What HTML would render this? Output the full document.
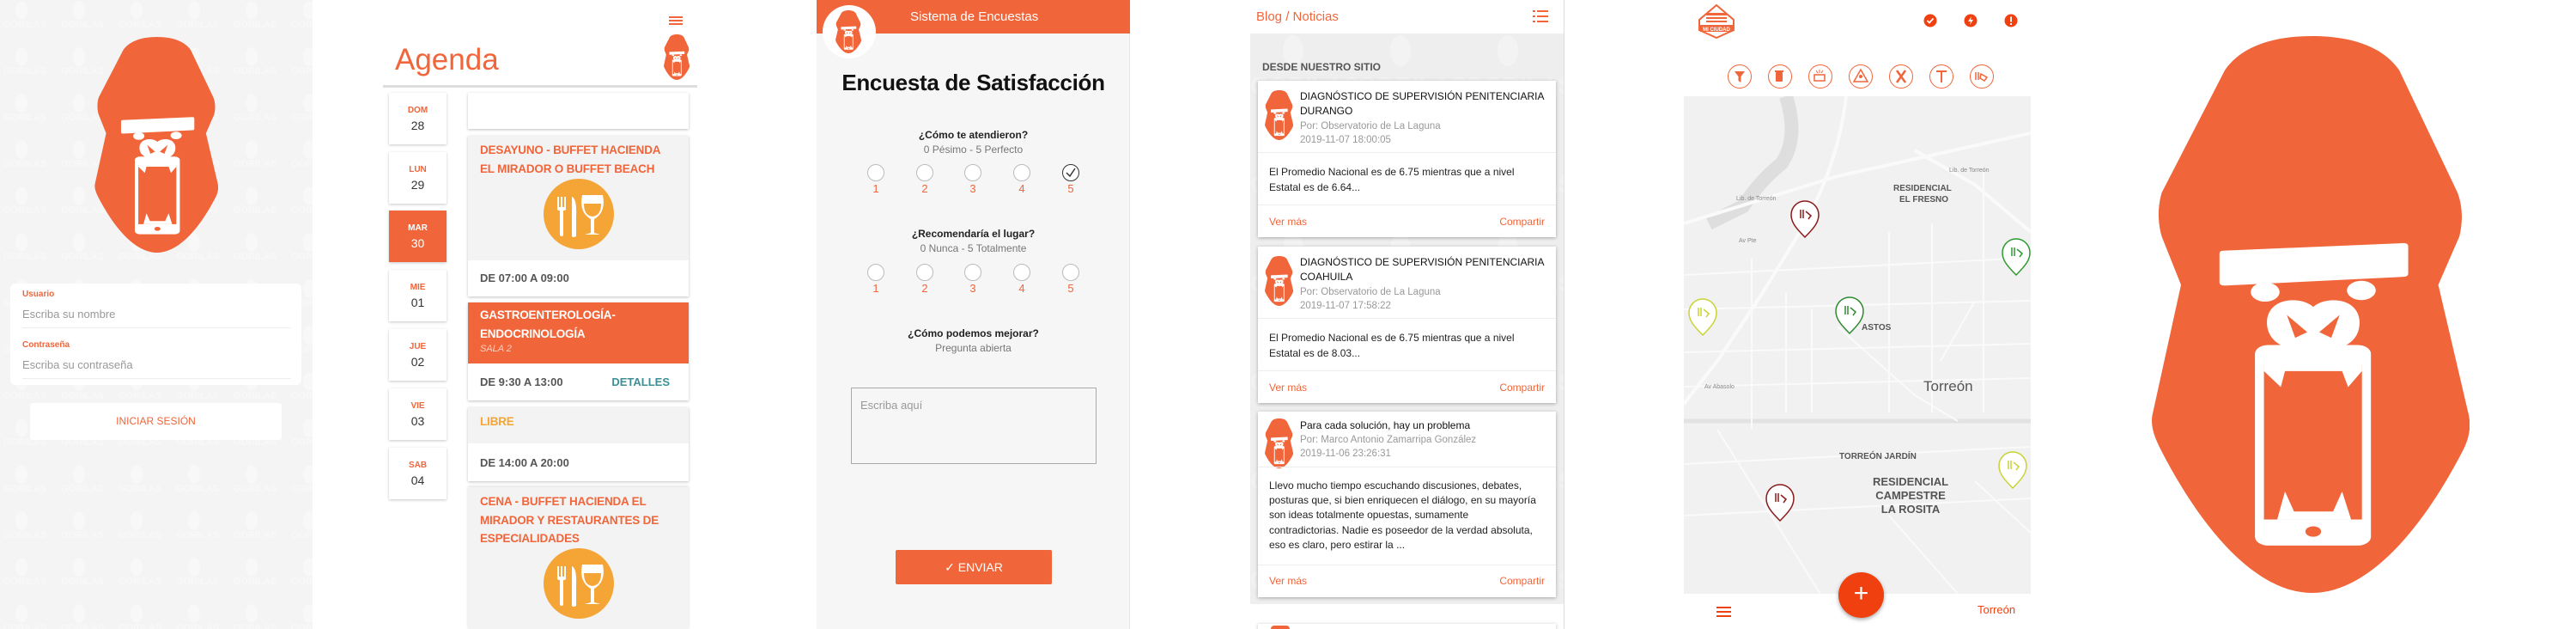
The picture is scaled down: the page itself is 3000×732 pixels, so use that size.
<!DOCTYPE html>
<html style="overflow:hidden"><head><meta charset="utf-8">
<style>
*{margin:0;padding:0;box-sizing:border-box}
html,body{width:3000px;height:732px;overflow:hidden}
body{background:#fff;position:relative;font-family:"Liberation Sans",sans-serif}
svg{display:block}
.a{position:absolute}
.or{color:#f0653a}
.sh{box-shadow:0 1px 3px rgba(0,0,0,.25)}
.dc{position:absolute;left:453px;width:67px;height:60px;background:#fff;text-align:center;box-shadow:0 1px 3px rgba(0,0,0,.22)}
.dc b{display:block;font-size:10px;color:#f0653a;margin-top:15px}
.dc span{display:block;font-size:14px;color:#333;margin-top:4px}
.ev{position:absolute;left:545px;width:257px}
.evt{font-size:13.5px;font-weight:bold;color:#f0653a;line-height:21.5px;padding:6px 0 0 14px;letter-spacing:-.2px}
.ft{background:#fff;font-size:13px;font-weight:bold;color:#555;padding-left:14px}
.rad{position:absolute;width:20px;height:20px;border:1px solid #bbb;border-radius:50%;background:#fff}
.num{position:absolute;font-size:13px;color:#f0653a;width:20px;text-align:center}
.q{position:absolute;left:951px;width:365px;text-align:center}
.card{position:absolute;left:1465px;width:347px;background:#fff;box-shadow:0 1px 4px rgba(0,0,0,.3);overflow:hidden}
.ct{position:absolute;left:49px;font-size:12px;color:#111;line-height:17px}
.cg{position:absolute;left:49px;font-size:11.5px;color:#999;line-height:16px}
.cb{position:absolute;left:13px;font-size:12px;color:#222;line-height:17.5px;width:330px}
.hr{position:absolute;left:0;right:0;height:1px;background:#eee}
.lk{position:absolute;font-size:12px;color:#f0653a}
.fi{position:absolute;top:75px;width:28px;height:28px;border:1.5px solid #f0653a;border-radius:50%;background:#fff}
</style></head><body>
<svg width="0" height="0" style="position:absolute">
<defs>
<symbol id="g" viewBox="862 90 530 1388" preserveAspectRatio="none">
<path fill="#f0653a" d="M1130,90 C1060,90 1010,120 985,175 L880,480 C872,520 874,560 880,590 L912,710 L865,1030 C860,1060 868,1090 878,1120 C950,1330 1040,1478 1130,1478 C1220,1478 1310,1330 1382,1120 C1392,1090 1395,1060 1390,1030 L1340,710 L1375,590 C1380,560 1382,520 1372,480 L1275,175 C1250,120 1200,90 1130,90 Z"/>
<path fill="#fff" d="M982,625 L1282,606 Q1290,606 1290,614 L1290,682 Q1290,690 1282,690 L985,712 Q976,712 976,704 L976,633 Q976,625 982,625 Z"/>
<circle cx="1052" cy="728" r="24" fill="#fff"/><circle cx="1212" cy="724" r="24" fill="#fff"/>
<path fill="#fff" d="M1132,765 C1112,738 1058,740 1055,800 C1054,835 1068,855 1085,865 L1180,865 C1197,855 1210,835 1209,800 C1206,740 1152,738 1132,765 Z"/>
<path fill="#f0653a" d="M1088,785 L1122,828 L1102,842 Z M1176,785 L1142,828 L1162,842 Z"/>
<rect x="1035" y="860" width="193" height="500" rx="22" fill="#fff"/>
<rect x="1050" y="910" width="163" height="385" fill="#f0653a"/>
<path fill="#fff" d="M1050,905 L1213,905 L1213,925 L1190,965 L1180,925 L1085,925 L1078,965 L1050,925 Z"/>
<path fill="#fff" d="M1072,1295 L1085,1225 L1100,1275 L1165,1275 L1180,1225 L1195,1295 Z"/>
<circle cx="1132" cy="1325" r="13" fill="#f0653a"/>
</symbol>
<pattern id="wm" width="67" height="54" patternUnits="userSpaceOnUse">
<ellipse cx="25" cy="12" rx="7" ry="11" fill="#f8f8f8"/>
<text x="4" y="32" font-family="Liberation Sans" font-size="11" font-weight="bold" fill="#f8f8f8">GORILAS</text>
</pattern>
<pattern id="wm2" width="125" height="115" patternUnits="userSpaceOnUse">
<ellipse cx="50" cy="20" rx="12" ry="18" fill="#f3f3f3"/>
<text x="0" y="70" font-family="Liberation Sans" font-size="28" font-weight="bold" fill="#f2f2f2">GORILAS</text>
</pattern>
</defs></svg>

<!-- Panel 1 Login -->
<div class="a" style="left:0;top:0;width:364px;height:732px;background:#f4f4f4"></div>
<svg class="a" style="left:0;top:0" width="364" height="732"><rect width="364" height="732" fill="url(#wm)"/></svg>
<svg class="a" style="left:110px;top:43px" width="144" height="251"><use href="#g" width="144" height="251"/></svg>
<div class="a" style="left:12px;top:330px;width:339px;height:118px;background:#fff;border-radius:6px"></div>
<div class="a or" style="left:26px;top:337px;font-size:10px;font-weight:bold">Usuario</div>
<div class="a" style="left:26px;top:358px;font-size:13px;color:#999">Escriba su nombre</div>
<div class="a" style="left:26px;top:381px;width:313px;height:1px;background:#eee"></div>
<div class="a or" style="left:26px;top:396px;font-size:10px;font-weight:bold">Contraseña</div>
<div class="a" style="left:26px;top:417px;font-size:13px;color:#999">Escriba su contraseña</div>
<div class="a" style="left:26px;top:440px;width:313px;height:1px;background:#eee"></div>
<div class="a" style="left:35px;top:469px;width:293px;height:43px;background:#fff;border-radius:3px;text-align:center;line-height:43px;font-size:12px;color:#f0653a">INICIAR SESIÓN</div>

<!-- Panel 2 Agenda -->
<div class="a or" style="left:460px;top:50px;font-size:35px">Agenda</div>
<div class="a" style="left:779px;top:19px;width:16px;height:2px;background:#f0653a;box-shadow:0 4px 0 #f0653a,0 8px 0 #f0653a"></div>
<svg class="a" style="left:773px;top:40px" width="30" height="53"><use href="#g" width="30" height="53"/></svg>
<div class="a" style="left:446px;top:99px;width:366px;height:3px;background:#ddd"></div>
<div class="dc" style="top:108px"><b>DOM</b><span>28</span></div>
<div class="dc" style="top:177px"><b>LUN</b><span>29</span></div>
<div class="dc" style="top:245px;background:#f0653a"><b style="color:#fff">MAR</b><span style="color:#fff">30</span></div>
<div class="dc" style="top:314px"><b>MIE</b><span>01</span></div>
<div class="dc" style="top:383px"><b>JUE</b><span>02</span></div>
<div class="dc" style="top:452px"><b>VIE</b><span>03</span></div>
<div class="dc" style="top:521px"><b>SAB</b><span>04</span></div>

<div class="ev sh" style="top:108px;height:42px;background:#fff"></div>
<div class="ev sh" style="top:158px;height:187px;background:#f3f3f3">
<div class="evt">DESAYUNO - BUFFET HACIENDA<br>EL MIRADOR O BUFFET BEACH</div>
<div class="ft a" style="left:0;top:145px;width:257px;height:42px;line-height:42px">DE 07:00 A 09:00</div>
</div>
<div class="ev sh" style="top:352px;height:114px;background:#fff">
<div style="background:#f0653a;height:71px"><div class="evt" style="color:#fff;padding-top:4px">GASTROENTEROLOGÍA-<br>ENDOCRINOLOGÍA</div>
<div style="color:#fbd0c0;font-size:11px;font-style:italic;padding-left:14px;margin-top:1px">SALA 2</div></div>
<div class="ft" style="height:43px;line-height:43px">DE 9:30 A 13:00<span style="position:absolute;right:22px;color:#3d8f95">DETALLES</span></div>
</div>
<div class="ev sh" style="top:474px;height:86px;background:#f3f3f3">
<div class="evt" style="color:#f4a535">LIBRE</div>
<div class="ft a" style="left:0;top:42px;width:257px;height:44px;line-height:46px">DE 14:00 A 20:00</div>
</div>
<div class="ev" style="top:567px;height:165px;background:#f3f3f3;box-shadow:0 -1px 3px rgba(0,0,0,.15)">
<div class="evt">CENA - BUFFET HACIENDA EL<br>MIRADOR Y RESTAURANTES DE<br>ESPECIALIDADES</div>
</div>
<svg class="a" style="left:632px;top:207px" width="84" height="84" viewBox="0 0 84 84">
<circle cx="42" cy="42" r="41" fill="#f4a535"/>
<g fill="#fff"><rect x="17" y="22" width="2" height="14"/><rect x="21" y="22" width="2" height="14"/><rect x="25" y="22" width="2" height="14"/><rect x="17" y="34" width="10" height="4" rx="2"/><rect x="20" y="36" width="4" height="32" rx="2"/>
<path d="M34,22 Q40,24 39,45 L39,68 Q35,70 34,68 Z"/>
<path d="M46,20 L70,20 Q74,40 60,48 L60,64 L67,66 L49,66 L56,64 L56,48 Q42,40 46,20 Z M48,30 L68,30 Q68,44 58,45 Q48,44 48,30 Z" fill-rule="evenodd"/></g>
</svg>
<svg class="a" style="left:632px;top:637px" width="84" height="84" viewBox="0 0 84 84">
<circle cx="42" cy="42" r="41" fill="#f4a535"/>
<g fill="#fff"><rect x="17" y="22" width="2" height="14"/><rect x="21" y="22" width="2" height="14"/><rect x="25" y="22" width="2" height="14"/><rect x="17" y="34" width="10" height="4" rx="2"/><rect x="20" y="36" width="4" height="32" rx="2"/>
<path d="M34,22 Q40,24 39,45 L39,68 Q35,70 34,68 Z"/>
<path d="M46,20 L70,20 Q74,40 60,48 L60,64 L67,66 L49,66 L56,64 L56,48 Q42,40 46,20 Z M48,30 L68,30 Q68,44 58,45 Q48,44 48,30 Z" fill-rule="evenodd"/></g>
</svg>

<!-- Panel 3 Survey -->
<div class="a" style="left:951px;top:0;width:365px;height:732px;background:#f6f6f6;border-right:1px solid #e6e6e6"></div>
<div class="a" style="left:951px;top:0;width:365px;height:39px;background:#f0653a"></div>
<div class="a" style="left:1060px;top:11px;font-size:15px;color:#fff">Sistema de Encuestas</div>
<div class="a" style="left:958px;top:6px;width:62px;height:62px;border-radius:50%;background:#fff"></div>
<svg class="a" style="left:973px;top:12px" width="30" height="50"><use href="#g" width="30" height="50"/></svg>
<div class="q" style="top:81px;font-size:26px;font-weight:bold;color:#111;letter-spacing:-.3px">Encuesta de Satisfacción</div>
<div class="q" style="top:150px;font-size:12px;font-weight:bold;color:#222">¿Cómo te atendieron?</div>
<div class="q" style="top:167px;font-size:12px;color:#777">0 Pésimo - 5 Perfecto</div>
<div class="q" style="top:265px;font-size:12px;font-weight:bold;color:#222">¿Recomendaría el lugar?</div>
<div class="q" style="top:282px;font-size:12px;color:#777">0 Nunca - 5 Totalmente</div>
<div class="q" style="top:381px;font-size:12px;font-weight:bold;color:#222">¿Cómo podemos mejorar?</div>
<div class="q" style="top:398px;font-size:12px;color:#777">Pregunta abierta</div>
<div class="rad" style="left:1010px;top:191px"></div><div class="rad" style="left:1067px;top:191px"></div><div class="rad" style="left:1123px;top:191px"></div><div class="rad" style="left:1180px;top:191px"></div>
<div class="rad" style="left:1237px;top:191px;border-color:#333"><svg width="18" height="18" style="position:absolute;left:0;top:0"><path d="M4,9 L8,13 L14,4" stroke="#333" stroke-width="1.5" fill="none"/></svg></div>
<div class="num" style="left:1010px;top:212px">1</div><div class="num" style="left:1067px;top:212px">2</div><div class="num" style="left:1123px;top:212px">3</div><div class="num" style="left:1180px;top:212px">4</div><div class="num" style="left:1237px;top:212px">5</div>
<div class="rad" style="left:1010px;top:307px"></div><div class="rad" style="left:1067px;top:307px"></div><div class="rad" style="left:1123px;top:307px"></div><div class="rad" style="left:1180px;top:307px"></div><div class="rad" style="left:1237px;top:307px"></div>
<div class="num" style="left:1010px;top:328px">1</div><div class="num" style="left:1067px;top:328px">2</div><div class="num" style="left:1123px;top:328px">3</div><div class="num" style="left:1180px;top:328px">4</div><div class="num" style="left:1237px;top:328px">5</div>
<div class="a" style="left:991px;top:451px;width:286px;height:89px;border:1px solid #aaa;background:#f6f6f6"><div style="padding:12px 0 0 10px;font-size:13px;color:#999">Escriba aquí</div></div>
<div class="a" style="left:1043px;top:640px;width:182px;height:40px;background:#f0653a;border-radius:2px;color:#fff;font-size:14px;text-align:center;line-height:40px">✓ ENVIAR</div>

<!-- Panel 4 Blog -->
<div class="a" style="left:1456px;top:39px;width:366px;height:664px;background:#eeeeee;overflow:hidden">
<svg width="366" height="664"><rect width="366" height="664" fill="url(#wm2)"/></svg></div>
<div class="a" style="left:1821px;top:0;width:1px;height:732px;background:#ddd"></div>
<div class="a or" style="left:1463px;top:11px;font-size:15px">Blog / Noticias</div>
<svg class="a" style="left:1785px;top:12px" width="18" height="14"><g fill="#f0653a"><rect x="0" y="0" width="3" height="2"/><rect x="5" y="0" width="13" height="2"/><rect x="0" y="6" width="3" height="2"/><rect x="5" y="6" width="13" height="2"/><rect x="0" y="12" width="3" height="2"/><rect x="5" y="12" width="13" height="2"/></g></svg>
<div class="a" style="left:1470px;top:71px;font-size:12px;font-weight:bold;color:#555">DESDE NUESTRO SITIO</div>

<div class="card" style="top:94px;height:182px">
<svg class="a" style="left:8px;top:11px" width="33" height="58"><use href="#g" width="33" height="58"/></svg>
<div class="ct" style="top:10px">DIAGNÓSTICO DE SUPERVISIÓN PENITENCIARIA<br>DURANGO</div>
<div class="cg" style="top:45px">Por: Observatorio de La Laguna<br>2019-11-07 18:00:05</div>
<div class="hr" style="top:83px"></div>
<div class="cb" style="top:98px">El Promedio Nacional es de 6.75 mientras que a nivel<br>Estatal es de 6.64...</div>
<div class="hr" style="top:144px"></div>
<div class="lk" style="left:13px;top:157px">Ver más</div><div class="lk" style="right:13px;top:157px">Compartir</div>
</div>
<div class="card" style="top:287px;height:182px">
<svg class="a" style="left:8px;top:11px" width="33" height="58"><use href="#g" width="33" height="58"/></svg>
<div class="ct" style="top:10px">DIAGNÓSTICO DE SUPERVISIÓN PENITENCIARIA<br>COAHUILA</div>
<div class="cg" style="top:45px">Por: Observatorio de La Laguna<br>2019-11-07 17:58:22</div>
<div class="hr" style="top:83px"></div>
<div class="cb" style="top:98px">El Promedio Nacional es de 6.75 mientras que a nivel<br>Estatal es de 8.03...</div>
<div class="hr" style="top:144px"></div>
<div class="lk" style="left:13px;top:157px">Ver más</div><div class="lk" style="right:13px;top:157px">Compartir</div>
</div>
<div class="card" style="top:479px;height:216px">
<svg class="a" style="left:8px;top:8px" width="33" height="58"><use href="#g" width="33" height="58"/></svg>
<div class="ct" style="top:8px">Para cada solución, hay un problema</div>
<div class="cg" style="top:25px">Por: Marco Antonio Zamarripa González<br>2019-11-06 23:26:31</div>
<div class="hr" style="top:64px"></div>
<div class="cb" style="top:78px;line-height:17.2px">Llevo mucho tiempo escuchando discusiones, debates,<br>posturas que, si bien enriquecen el diálogo, en su mayoría<br>son ideas totalmente opuestas, sumamente<br>contradictorias. Nadie es poseedor de la verdad absoluta,<br>eso es claro, pero estirar la ...</div>
<div class="hr" style="top:178px"></div>
<div class="lk" style="left:13px;top:190px">Ver más</div><div class="lk" style="right:13px;top:190px">Compartir</div>
</div>
<div class="card" style="top:726px;height:6px"></div>
<div class="a" style="left:1480px;top:728px;width:22px;height:4px;background:#f0653a;border-radius:11px 11px 0 0"></div>

<!-- Panel 5 Map -->
<svg class="a" style="left:1977px;top:5px" width="44" height="40" viewBox="0 0 44 40">
<path d="M22,1 L42,18 L42,30 L22,39 L2,30 L2,18 Z" fill="#fff" stroke="#f0653a" stroke-width="2"/>
<g fill="#f0653a"><rect x="10" y="10" width="24" height="3"/><rect x="10" y="15" width="24" height="2"/><rect x="10" y="19" width="24" height="2"/><rect x="3" y="24" width="38" height="8"/></g>
<text x="22" y="31" font-family="Liberation Sans" font-size="6" font-weight="bold" fill="#fff" text-anchor="middle">MI CIUDAD</text>
</svg>
<svg class="a" style="left:2240px;top:16px" width="112" height="16">
<circle cx="8" cy="8" r="7.5" fill="#f0400f"/><path d="M4.5,8 L7,10.5 L11.5,5.5" stroke="#fff" stroke-width="1.8" fill="none"/>
<circle cx="55" cy="8" r="7.5" fill="#f0400f"/><path d="M56,3 L52,9 L55,9 L54,13 L58,7 L55,7 Z" fill="#fff"/>
<circle cx="102" cy="8" r="7.5" fill="#f0400f"/><rect x="101" y="3.5" width="2" height="6" fill="#fff"/><rect x="101" y="11" width="2" height="2" fill="#fff"/>
</svg>
<div class="fi" style="left:2012px"></div><div class="fi" style="left:2059px"></div><div class="fi" style="left:2106px"></div><div class="fi" style="left:2153px"></div><div class="fi" style="left:2200px"></div><div class="fi" style="left:2247px"></div><div class="fi" style="left:2294px"></div>
<svg class="a" style="left:2012px;top:75px" width="310" height="28" viewBox="0 0 310 28" fill="#f0653a">
<path d="M8,8 L20,8 L15.5,14 L15.5,21 L12.5,19 L12.5,14 Z"/>
<rect x="56" y="9" width="8" height="11" rx="1"/><rect x="55" y="7" width="10" height="2"/>
<rect x="101" y="12" width="12" height="7" fill="none" stroke="#f0653a" stroke-width="1.5"/><path d="M107,6 L107,10 M103,7 L105,10 M111,7 L109,10" stroke="#f0653a" stroke-width="1"/>
<path d="M155,6 L163,20 L147,20 Z" fill="none" stroke="#f0653a" stroke-width="1.5"/><circle cx="155" cy="14" r="2"/>
<path d="M197,7 L207,21 M207,7 L197,21" stroke="#f0653a" stroke-width="2.5"/>
<path d="M243,8 L255,8 M249,8 L249,21" stroke="#f0653a" stroke-width="2"/>
<path d="M289,9 L289,18 M292,9 L292,18 M295,11 L302,15 L299,19 L294,16 Z" stroke="#f0653a" stroke-width="1.5" fill="none"/>
</svg>
<svg class="a" style="left:1961px;top:112px" width="404" height="579" viewBox="1961 112 404 579">
<rect x="1961" y="112" width="404" height="579" fill="#f1f1f1"/>
<path d="M2080,112 Q2095,160 2075,190 Q2050,210 2030,240 L1990,260" stroke="#dedede" stroke-width="16" fill="none"/>
<g stroke="#fafafa" fill="none">
<path d="M1961,260 L2140,205 L2365,155" stroke-width="4"/>
<path d="M2150,112 Q2140,200 2090,280 L2050,345 L2000,420 L1961,470" stroke-width="4"/>
<path d="M2230,175 L2300,215 L2365,270" stroke-width="4"/>
<path d="M1961,490 L2365,490" stroke-width="5" stroke="#e2e2e2"/>
<path d="M2040,300 L2040,500 M2080,340 L2080,480 M2110,360 L2110,480 M2200,270 L2200,480 M2250,260 L2250,480 M2310,200 L2310,480" stroke-width="2"/>
<path d="M1961,320 L2365,300 M1961,360 L2365,350 M1961,410 L2365,400 M1961,450 L2365,440" stroke-width="2"/>
<path d="M2140,380 L2230,460 L2280,490 M2260,420 L2300,350" stroke-width="2"/>
<path d="M1961,540 L2365,520 M1961,600 L2365,580 M2000,500 L2120,691 M2200,600 L2280,691 M2300,560 L2365,620" stroke-width="2"/>
</g>
<g font-family="Liberation Sans" fill="#555" font-weight="bold">
<text x="2205" y="222" font-size="10">RESIDENCIAL</text><text x="2212" y="235" font-size="10">EL FRESNO</text>
<text x="2168" y="384" font-size="10">ASTOS</text>
<text x="2142" y="534" font-size="10">TORREÓN JARDÍN</text>
<text x="2225" y="565" font-size="13" text-anchor="middle">RESIDENCIAL</text><text x="2225" y="581" font-size="13" text-anchor="middle">CAMPESTRE</text><text x="2225" y="597" font-size="13" text-anchor="middle">LA ROSITA</text>
</g>
<text x="2240" y="455" font-family="Liberation Sans" font-size="17" fill="#555">Torreón</text>
<g font-family="Liberation Sans" font-size="7" fill="#888"><text x="2022" y="233">Lib. de Torreón</text><text x="2270" y="200">Lib. de Torreón</text><text x="1985" y="452">Av Abasolo</text><text x="2025" y="282">Av Pte</text></g>
<g stroke-width="1.5" fill="#fff">
<path d="M2102,276 C2090,264 2086,258 2086,250 A16,16 0 0 1 2118,250 C2118,258 2114,264 2102,276 Z" stroke="#8b1a1a"/>
<path d="M2348,320 C2336,308 2332,302 2332,294 A16,16 0 0 1 2364,294 C2364,302 2360,308 2348,320 Z" stroke="#2f9a2f"/>
<path d="M1983,390 C1971,378 1967,372 1967,364 A16,16 0 0 1 1999,364 C1999,372 1995,378 1983,390 Z" stroke="#c8d435"/>
<path d="M2154,388 C2142,376 2138,370 2138,362 A16,16 0 0 1 2170,362 C2170,370 2166,376 2154,388 Z" stroke="#2f8a2f"/>
<path d="M2344,568 C2332,556 2328,550 2328,542 A16,16 0 0 1 2360,542 C2360,550 2356,556 2344,568 Z" stroke="#c8d435"/>
<path d="M2073,606 C2061,594 2057,588 2057,580 A16,16 0 0 1 2089,580 C2089,588 2085,594 2073,606 Z" stroke="#8b1a1a"/>
</g>
<g stroke-width="1.5" fill="none">
<path d="M2097,244 L2097,254 M2100,244 L2100,254 M2103,246 L2109,251 L2106,255" stroke="#8b1a1a"/>
<path d="M2343,288 L2343,298 M2346,288 L2346,298 M2349,290 L2355,295 L2352,299" stroke="#2f9a2f"/>
<path d="M1978,358 L1978,368 M1981,358 L1981,368 M1984,360 L1990,365 L1987,369" stroke="#c8d435"/>
<path d="M2149,356 L2149,366 M2152,356 L2152,366 M2155,358 L2161,363 L2158,367" stroke="#2f8a2f"/>
<path d="M2339,536 L2339,546 M2342,536 L2342,546 M2345,538 L2351,543 L2348,547" stroke="#c8d435"/>
<path d="M2068,574 L2068,584 M2071,574 L2071,584 M2074,576 L2080,581 L2077,585" stroke="#8b1a1a"/>
</g>
</svg>
<div class="a" style="left:1961px;top:691px;width:404px;height:41px;background:#fff"></div>
<div class="a" style="left:1999px;top:706px;width:17px;height:2px;background:#f0400f;box-shadow:0 5px 0 #f0400f,0 10px 0 #f0400f"></div>
<div class="a" style="left:2303px;top:702px;font-size:13px;color:#f0400f">Torreón</div>
<div class="a" style="left:2141px;top:666px;width:53px;height:53px;border-radius:50%;background:#f0400f;box-shadow:0 2px 5px rgba(0,0,0,.35);color:#fff;font-size:30px;text-align:center;line-height:50px">+</div>

<!-- Panel 6 big gorilla -->
<svg class="a" style="left:2505px;top:42px" width="371" height="648"><use href="#g" width="371" height="648"/></svg>
</body></html>
